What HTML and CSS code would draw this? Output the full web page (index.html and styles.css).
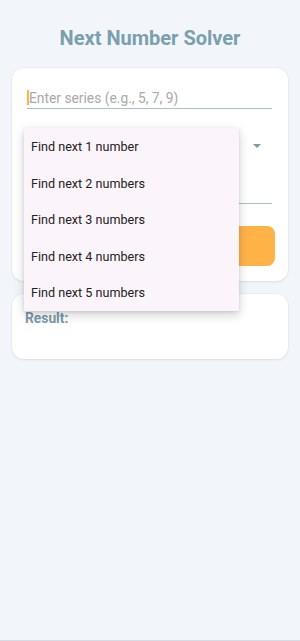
FILE: index.html
```html
<!doctype html>
<html lang="en">
<head>
  <meta charset="utf-8">
  <title>Next Number Solver</title>
  <meta name="viewport" content="width=device-width, initial-scale=1">
<link rel="stylesheet" href="styles.css">
</head>
<body>
  <main class="screen">
    <h1 class="title">Next Number Solver</h1>

    <!-- Saisie + choix -->
    <section class="card form-card">
      <div class="field field-series">
        <span class="caret"></span><span class="placeholder">Enter series (e.g., 5, 7, 9)</span>
      </div>

      <div class="field field-select">
        <span class="arrow"></span>
      </div>

      <button class="btn" type="button"></button>

      <!-- Menu ouvert -->
      <ul class="menu">
        <li>Find next 1 number</li>
        <li>Find next 2 numbers</li>
        <li>Find next 3 numbers</li>
        <li>Find next 4 numbers</li>
        <li>Find next 5 numbers</li>
      </ul>
    </section>

    <section class="card result-card">
      <div class="result-label">Result:</div>
    </section>
  </main>
</body>
</html>
```

FILE: styles.css
```css
:root{
  --bg:#f2f6fa; --card:#fff; --accent:#7aa0ae; --line:#a9c1ca;
  --orange:#ffb347; --menu:#fcf4fb; --text:#222;
}
*{ box-sizing:border-box }
html,body{ height:100% }
body{ margin:0; background:var(--bg); font:14px/1.4 Roboto,"Noto Sans",sans-serif; color:var(--text); }

.screen{ min-height:100%; padding:0 12px; border-bottom:1px solid #d6dce1; }

.title{ margin:0; padding:26px 0 18px; text-align:center; font-size:20px; line-height:24px; font-weight:700; color:var(--accent); }

.card{ position:relative; background:var(--card); border-radius:12px; box-shadow:0 1px 3px rgba(0,0,0,.07), 0 0 0 1px rgba(0,0,0,.025); }

.form-card{ z-index:2; padding:21px 16px 15px 15px; }

.field{ border-bottom:1.5px solid var(--line); }
.field-series{ height:20px; display:flex; align-items:flex-start; }
.caret{ display:inline-block; width:2px; height:15px; margin-top:1px; background:var(--orange); }
.placeholder{ color:#a9a9a9; font-size:13.8px; line-height:18px; margin-left:0; }

.field-select{ position:relative; height:76px; margin-top:19px; border-bottom-width:1px; }
.arrow{ position:absolute; right:11px; top:16px; width:0; height:0; border-left:4px solid transparent; border-right:4px solid transparent; border-top:4px solid #7d9aa6; }

.btn{ display:block; width:calc(100% + 3px); height:40px; margin-top:22px; border:0; border-radius:8px; background:var(--orange); }

.menu{ position:absolute; left:12px; top:60px; width:215px; margin:0; padding:0; list-style:none; background:var(--menu); box-shadow:0 4px 10px rgba(0,0,0,.18), 0 1px 3px rgba(0,0,0,.1); }
.menu li{ height:36.5px; display:flex; align-items:center; padding:2px 0 0 7px; font-size:12.6px; color:var(--text); }

.result-card{ z-index:1; margin-top:13px; height:65px; padding:15px 13px; }
.result-label{ font-size:13.8px; font-weight:700; color:#7a9aaa; }
```
